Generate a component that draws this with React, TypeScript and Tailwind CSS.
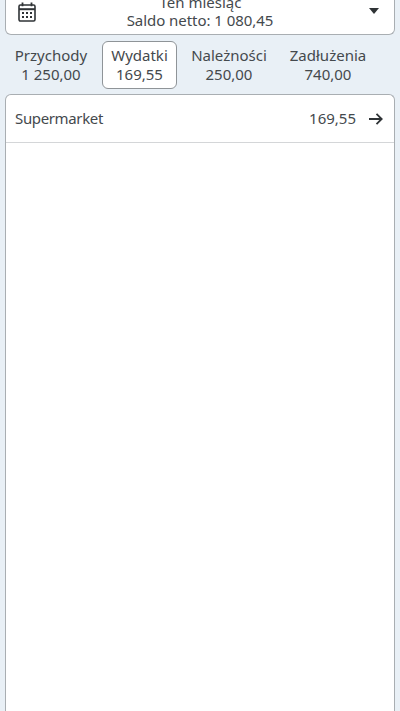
import React from "react";

const tabs = [
  { label: "Przychody", value: "1 250,00", active: false, w: "w-[92px]" },
  { label: "Wydatki", value: "169,55", active: true, w: "w-[75px]" },
  { label: "Należności", value: "250,00", active: false, w: "w-[94px]" },
  { label: "Zadłużenia", value: "740,00", active: false, w: "w-[94px]" },
];

function CalendarIcon() {
  return (
    <svg width="18" height="20" viewBox="0 0 18 20" fill="none" stroke="#2f3336" strokeWidth="1.6">
      <rect x="1" y="3" width="16" height="16" rx="1.4" />
      <path d="M1 7.200h16" strokeWidth="2" />
      <path d="M4.500 0.400v3.800M13.500 0.400v3.800" strokeWidth="1.800" />
      <g fill="#2f3336" stroke="none">
        <rect x="4" y="10" width="2" height="2" />
        <rect x="8" y="10" width="2" height="2" />
        <rect x="12" y="10" width="2" height="2" />
        <rect x="4" y="14" width="2" height="2" />
        <rect x="8" y="14" width="2" height="2" />
        <rect x="12" y="14" width="2" height="2" />
      </g>
    </svg>
  );
}

export default function App() {
  return (
    <div className="h-[711px] w-[400px] overflow-hidden bg-[#e9f0f6] px-[5px] font-['Noto_Sans','Open_Sans',sans-serif] text-[15px] text-[#44494d]">
      <div className="-mt-[12px] flex h-[47px] items-center rounded-b-[6px] border border-t-0 border-[#a9aeb2] bg-white pl-[12px] pr-[15px]">
        <div className="flex w-[19px] pt-[1px]">
          <CalendarIcon />
        </div>
        <div className="flex-1 text-center leading-[18px]">
          <div>Ten miesiąc</div>
          <div className="-ml-[1px] tracking-[-0.05px]">Saldo netto: 1 080,45</div>
        </div>
        <div className="flex w-[15px] justify-end">
          <div className="h-0 w-0 border-x-[5.5px] border-t-[6px] border-x-transparent border-t-[#2f3336]" />
        </div>
      </div>
      <div className="mt-[6px] flex h-[48px] items-stretch gap-[5px]">
        {tabs.map((t) => (
          <div
            key={t.label}
            className={`${t.w} ${t.active ? "rounded-[6px] border border-[#8f9498] bg-white" : ""} flex flex-col items-center justify-center text-center leading-[19px]`}
          >
            <div>{t.label}</div>
            <div>{t.value}</div>
          </div>
        ))}
      </div>
      <div className="mt-[5px] h-[640px] rounded-t-[6px] border border-b-0 border-[#a9aeb2] bg-white">
        <div className="flex h-[48px] items-center border-b border-[#d4d6d8] pl-[9px] pr-[11px]">
          <span className="flex-1 tracking-[-0.36px]">Supermarket</span>
          <span>169,55</span>
          <svg className="ml-[13px]" width="14" height="12" viewBox="0 0 14 12" fill="none" stroke="#2f3336" strokeWidth="1.8">
            <path d="M0 6h12.500M7.500 0.800 12.700 6l-5.200 5.200" />
          </svg>
        </div>
      </div>
    </div>
  );
}
